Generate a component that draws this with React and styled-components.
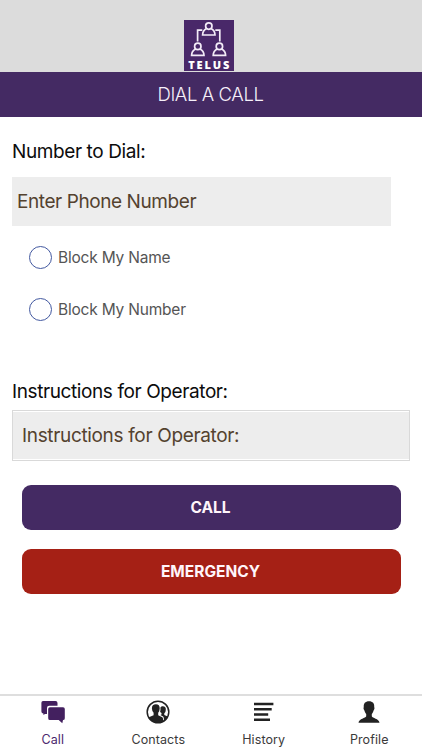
import React from 'react';
import styled, { createGlobalStyle } from 'styled-components';

const GlobalStyle = createGlobalStyle`
    body {
        margin: 0;
        background: #fff;
        font-family: Inter, "Liberation Sans", sans-serif;
    }
    * {
        box-sizing: border-box;
    }
`;

const Screen = styled.div`
    display: flex;
    flex-direction: column;
    width: 422px;
    height: 750px;
    overflow: hidden;
`;

const Header = styled.header`
    display: flex;
    justify-content: center;
    height: 72px;
    padding: 20px 4px 0 0;
    background: #dcdcdc;
`;

const TitleBar = styled.h1`
    height: 45px;
    margin: 0;
    padding-right: 1px;
    background: #442a63;
    color: #f6f0fa;
    font-size: 18.5px;
    font-weight: 300;
    line-height: 45px;
    letter-spacing: -0.4px;
    text-align: center;
`;

const Form = styled.main`
    display: flex;
    flex-direction: column;
    flex: 1;
    padding: 20px 12px 0 12px;
`;

const Label = styled.label`
    height: 30px;
    color: #0c0c0c;
    font-size: 19px;
    line-height: 30px;
    letter-spacing: -0.4px;
`;

const Input = styled.input`
    width: ${props => props.$wide ? "100%" : "379px"};
    height: ${props => props.$wide ? "47px" : "49px"};
    padding: 0 ${props => props.$wide ? "9px" : "5px"} 1px;
    border: none;
    border-radius: 0;
    background: #ededed;
    font-family: inherit;
    font-size: 19px;
    letter-spacing: ${props => props.$wide ? "-0.34px" : "-0.42px"};
    outline: none;
    &::placeholder {
        color: #54422f;
        opacity: 1;
    }
`;

const PhoneRow = styled.div`
    display: flex;
    margin-top: 10px;
`;

const Frame = styled.div`
    display: flex;
    height: 51px;
    margin-top: 3px;
    padding: 1px 0;
    border: 1px solid #d9d9d9;
`;

const Options = styled.div`
    display: flex;
    flex-direction: column;
    gap: 28px;
    margin: 19px 0 56px;
    padding-left: 17px;
`;

const Option = styled.label`
    display: flex;
    align-items: center;
    height: 24px;
    gap: 6px;
    color: #555;
    font-size: 15.5px;
    letter-spacing: -0.2px;
`;

const Radio = styled.span`
    width: 23px;
    height: 23px;
    border: 1.3px solid #4359a0;
    border-radius: 50%;
`;

const Actions = styled.div`
    display: flex;
    flex-direction: column;
    gap: 19px;
    padding: 23.5px 9px 0 10px;
`;

const Button = styled.button`
    height: 45px;
    padding: 0 2px 0 0;
    border: none;
    border-radius: 9px;
    background: ${props => props.$danger ? "#a52015" : "#442a63"};
    color: #fff5fa;
    font-family: inherit;
    font-size: 15.5px;
    font-weight: 700;
`;

const TabBar = styled.nav`
    display: grid;
    grid-template-columns: repeat(4, 1fr);
    height: 56px;
    border-top: 2px solid #dedede;
`;

const Tab = styled.a`
    display: flex;
    flex-direction: column;
    align-items: center;
    padding-top: 4px;
    color: ${props => props.$active ? "#4b286d" : "#3a3a3a"};
    font-size: 12.5px;
    line-height: 16px;
    letter-spacing: 0.1px;
`;

const TabIcon = styled.svg`
    width: 26px;
    height: 26px;
    margin-bottom: 6px;
    fill: ${props => props.$active ? "#43205f" : "#222"};
`;

const LogoBox = styled.div`
    display: flex;
    flex-direction: column;
    align-items: center;
    width: 50px;
    height: 51px;
    background: #492869;
`;

const LogoText = styled.span`
    color: #fff;
    font-family: "Open Sans", sans-serif;
    font-size: 11px;
    font-weight: 800;
    line-height: 12px;
    letter-spacing: 1.9px;
    margin-right: -1.5px;
`;

function Person({ x, y }) {
    return (
        <g transform={`translate(${x} ${y})`}>
            <circle cx="0" cy="4.1" r="3.2" />
            <path d="M-2.2 6.6C-4.8 7.8-6.1 9.4-6.2 13H6.2C6.1 9.4 4.8 7.8 2.2 6.6" />
        </g>
    );
}

function Logo() {
    return (
        <LogoBox>
            <svg width="50" height="39" viewBox="0 0 50 39" fill="none" stroke="#f3ebf7" strokeWidth="1.7">
                <Person x={24.8} y={2} />
                <Person x={13.8} y={22.3} />
                <Person x={35.4} y={22.3} />
                <path d="M18.3 10.2H13.6V21.5M31.3 10.2H35.8V21.5" />
            </svg>
            <LogoText>TELUS</LogoText>
        </LogoBox>
    );
}

function CallIcon() {
    return (
        <TabIcon $active viewBox="0 0 26 26">
            <path d="M3 1H15.5Q17.5 1 17.5 3V5.8H9.2Q7 5.8 7 8V14H5L3.4 15V13.6Q1.4 13.4 1.4 11.6V2.8Q1.4 1 3 1Z" />
            <path d="M10 7.2H23Q24.8 7.2 24.8 9V18.2Q24.8 20 23 20.1L22.3 23.2L18.7 20.1H10Q8.2 20.1 8.2 18.2V9Q8.2 7.2 10 7.2Z" />
        </TabIcon>
    );
}

function ContactsIcon() {
    return (
        <TabIcon viewBox="0 0 26 26">
            <circle cx="13" cy="12" r="10.8" fill="none" stroke="#222" strokeWidth="1.5" />
            <path d="M6.9 8.4C6.9 5.8 8.3 4.3 10.9 4.3S14.8 5.9 14.7 8.4L14.2 11.2L13.2 12.8V15.2L17.3 17.2C18.2 18 18.4 20.5 18 21.5C13 24.3 6.5 22.5 3.2 17.6L8.6 15.2V12.8L7.4 11Z" />
            <path d="M15.4 7.4C16 6.5 16.8 6.2 17.8 6.2C20 6.2 21.1 7.6 20.8 9.7L20.4 12L19.3 13.2V15L22.8 16.5C22 18.5 20.5 20.2 19 21C19 18.5 18.7 16.8 17.7 16.3L15.3 15.1L16.5 14.5V13L15.1 12.1L15.5 9.8Z" />
        </TabIcon>
    );
}

function HistoryIcon() {
    return (
        <TabIcon viewBox="0 0 26 26">
            <path d="M3 2.8H22.4V5.2H3ZM3 8H20.7V10.4H3ZM3 13.3H17.2V15.7H3ZM3 18.6H19V21H3Z" />
        </TabIcon>
    );
}

function ProfileIcon() {
    return (
        <TabIcon viewBox="0 0 26 26">
            <path d="M7.8 7.3C7.3 3.5 9.3 1.3 13 1.3S18.7 3.5 18.2 7.3C18.8 7.5 18.5 9.3 17.6 10.4C17.1 12.4 16.3 13.2 15.8 14V16.3C16.4 18.4 22.8 18.5 23.5 22.8H2.5C3.2 18.5 9.6 18.4 10.2 16.3V14C9.7 13.2 8.9 12.4 8.4 10.4C7.5 9.3 7.2 7.5 7.8 7.3Z" />
        </TabIcon>
    );
}

export default function App()
{
  return (
    <Screen>
        <GlobalStyle />
        <Header><Logo /></Header>
        <TitleBar>DIAL A CALL</TitleBar>
        <Form>
            <Label htmlFor="phone">Number to Dial:</Label>
            <PhoneRow>
                <Input id="phone" placeholder="Enter Phone Number" />
            </PhoneRow>
            <Options>
                <Option><Radio />Block My Name</Option>
                <Option><Radio />Block My Number</Option>
            </Options>
            <Label htmlFor="instructions">Instructions for Operator:</Label>
            <Frame>
                <Input $wide id="instructions" placeholder="Instructions for Operator:" />
            </Frame>
            <Actions>
                <Button>CALL</Button>
                <Button $danger>EMERGENCY</Button>
            </Actions>
        </Form>
        <TabBar>
            <Tab $active><CallIcon />Call</Tab>
            <Tab><ContactsIcon />Contacts</Tab>
            <Tab><HistoryIcon />History</Tab>
            <Tab><ProfileIcon />Profile</Tab>
        </TabBar>
    </Screen>
  )
}
